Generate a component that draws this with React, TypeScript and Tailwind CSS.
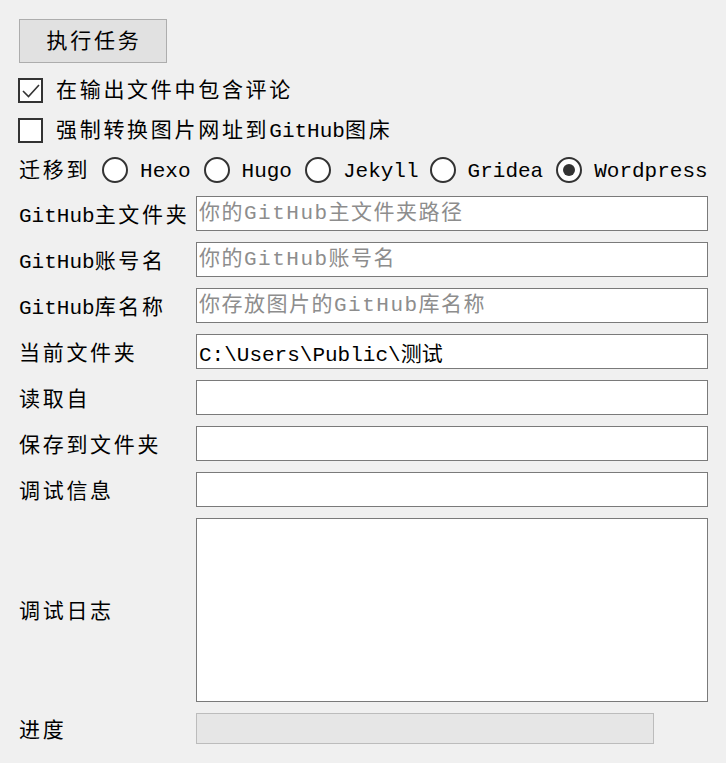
import React from 'react';

// latin runs stay tight, CJK runs get the wide GDI-like spacing
function T({ s }: { s: string }) {
  const parts = s.split(/([\x00-\x7f]+)/).filter(Boolean);
  return (
    <>
      {parts.map((p, i) =>
        /^[\x00-\x7f]+$/.test(p) ? (
          <span key={i}>{p}</span>
        ) : (
          <span key={i} className="tracking-[2.7px]">{p}</span>
        )
      )}
    </>
  );
}

function Checkbox({ checked, label }: { checked: boolean; label: string }) {
  return (
    <div className="flex items-center h-[26px] gap-[13px]">
      <div className="w-[25px] h-[25px] border-2 border-[#333333] bg-white shrink-0 flex items-center justify-center">
        {checked && (
          <svg width="21" height="21" viewBox="0 0 21 21">
            <path d="M3 11 L8.5 16.5 L19 5" fill="none" stroke="#333333" strokeWidth="1.6" />
          </svg>
        )}
      </div>
      <span className="whitespace-nowrap pt-[3px]"><T s={label} /></span>
    </div>
  );
}

const platforms = [
  { name: 'Hexo', ml: 'ml-[12px]' },
  { name: 'Hugo', ml: 'ml-[13px]' },
  { name: 'Jekyll', ml: 'ml-[13px]' },
  { name: 'Gridea', ml: 'ml-[11px]' },
  { name: 'Wordpress', ml: 'ml-[13px]' },
];

const fields = [
  { label: 'GitHub主文件夹', placeholder: '你的GitHub主文件夹路径', value: '' },
  { label: 'GitHub账号名', placeholder: '你的GitHub账号名', value: '' },
  { label: 'GitHub库名称', placeholder: '你存放图片的GitHub库名称', value: '' },
  { label: '当前文件夹', placeholder: '', value: 'C:\\Users\\Public\\测试' },
  { label: '读取自', placeholder: '', value: '' },
  { label: '保存到文件夹', placeholder: '', value: '' },
  { label: '调试信息', placeholder: '', value: '' },
];

export default function App() {
  return (
    <div className="min-h-screen w-full bg-[#f0f0f0] text-black text-[21px] leading-none font-['Liberation_Mono','Noto_Sans_CJK_SC',monospace] pt-[19px] pl-[18px]">
      <button className="ml-px w-[148px] h-[44px] bg-[#e1e1e1] border border-[#adadad] flex items-center justify-center pt-[2px] pl-[2px]">
        <T s="执行任务" />
      </button>

      <div className="mt-[14px] flex flex-col gap-[14px]">
        <Checkbox checked label="在输出文件中包含评论" />
        <Checkbox checked={false} label="强制转换图片网址到GitHub图床" />

        <div className="flex items-center h-[26px] pl-px">
          <span className="whitespace-nowrap pt-[2px]"><T s="迁移到" /></span>
          {platforms.map((p) => (
            <div key={p.name} className={`flex items-center gap-[12px] ${p.ml}`}>
              <div className="w-[26px] h-[26px] rounded-full border-2 border-[#333333] bg-white flex items-center justify-center shrink-0">
                {p.name === 'Wordpress' && <div className="w-[12px] h-[12px] rounded-full bg-[#333333]" />}
              </div>
              <span className="whitespace-nowrap pt-[2px]"><T s={p.name} /></span>
            </div>
          ))}
        </div>
      </div>

      <div className="mt-[13px] pl-px grid grid-cols-[177px_512px] gap-y-[11px] items-center">
        {fields.map((f) => (
          <React.Fragment key={f.label}>
            <span className="whitespace-nowrap pt-[5px]"><T s={f.label} /></span>
            <input
              readOnly
              value={f.value}
              placeholder={f.placeholder}
              className="h-[35px] w-full bg-white border border-[#7a7a7a] pl-[2px] text-[21px] text-black outline-none placeholder:text-[#8d8d8d] placeholder:tracking-[1.5px] font-['Liberation_Mono','Noto_Sans_CJK_SC',monospace]"
            />
          </React.Fragment>
        ))}
        <span className="whitespace-nowrap pt-[5px]"><T s="调试日志" /></span>
        <textarea readOnly className="h-[184px] w-full bg-white border border-[#7a7a7a] resize-none outline-none block" />
        <span className="whitespace-nowrap pt-[5px]"><T s="进度" /></span>
        <div className="h-[31px] w-[458px] bg-[#e6e6e6] border border-[#bcbcbc]" />
      </div>
    </div>
  );
}
